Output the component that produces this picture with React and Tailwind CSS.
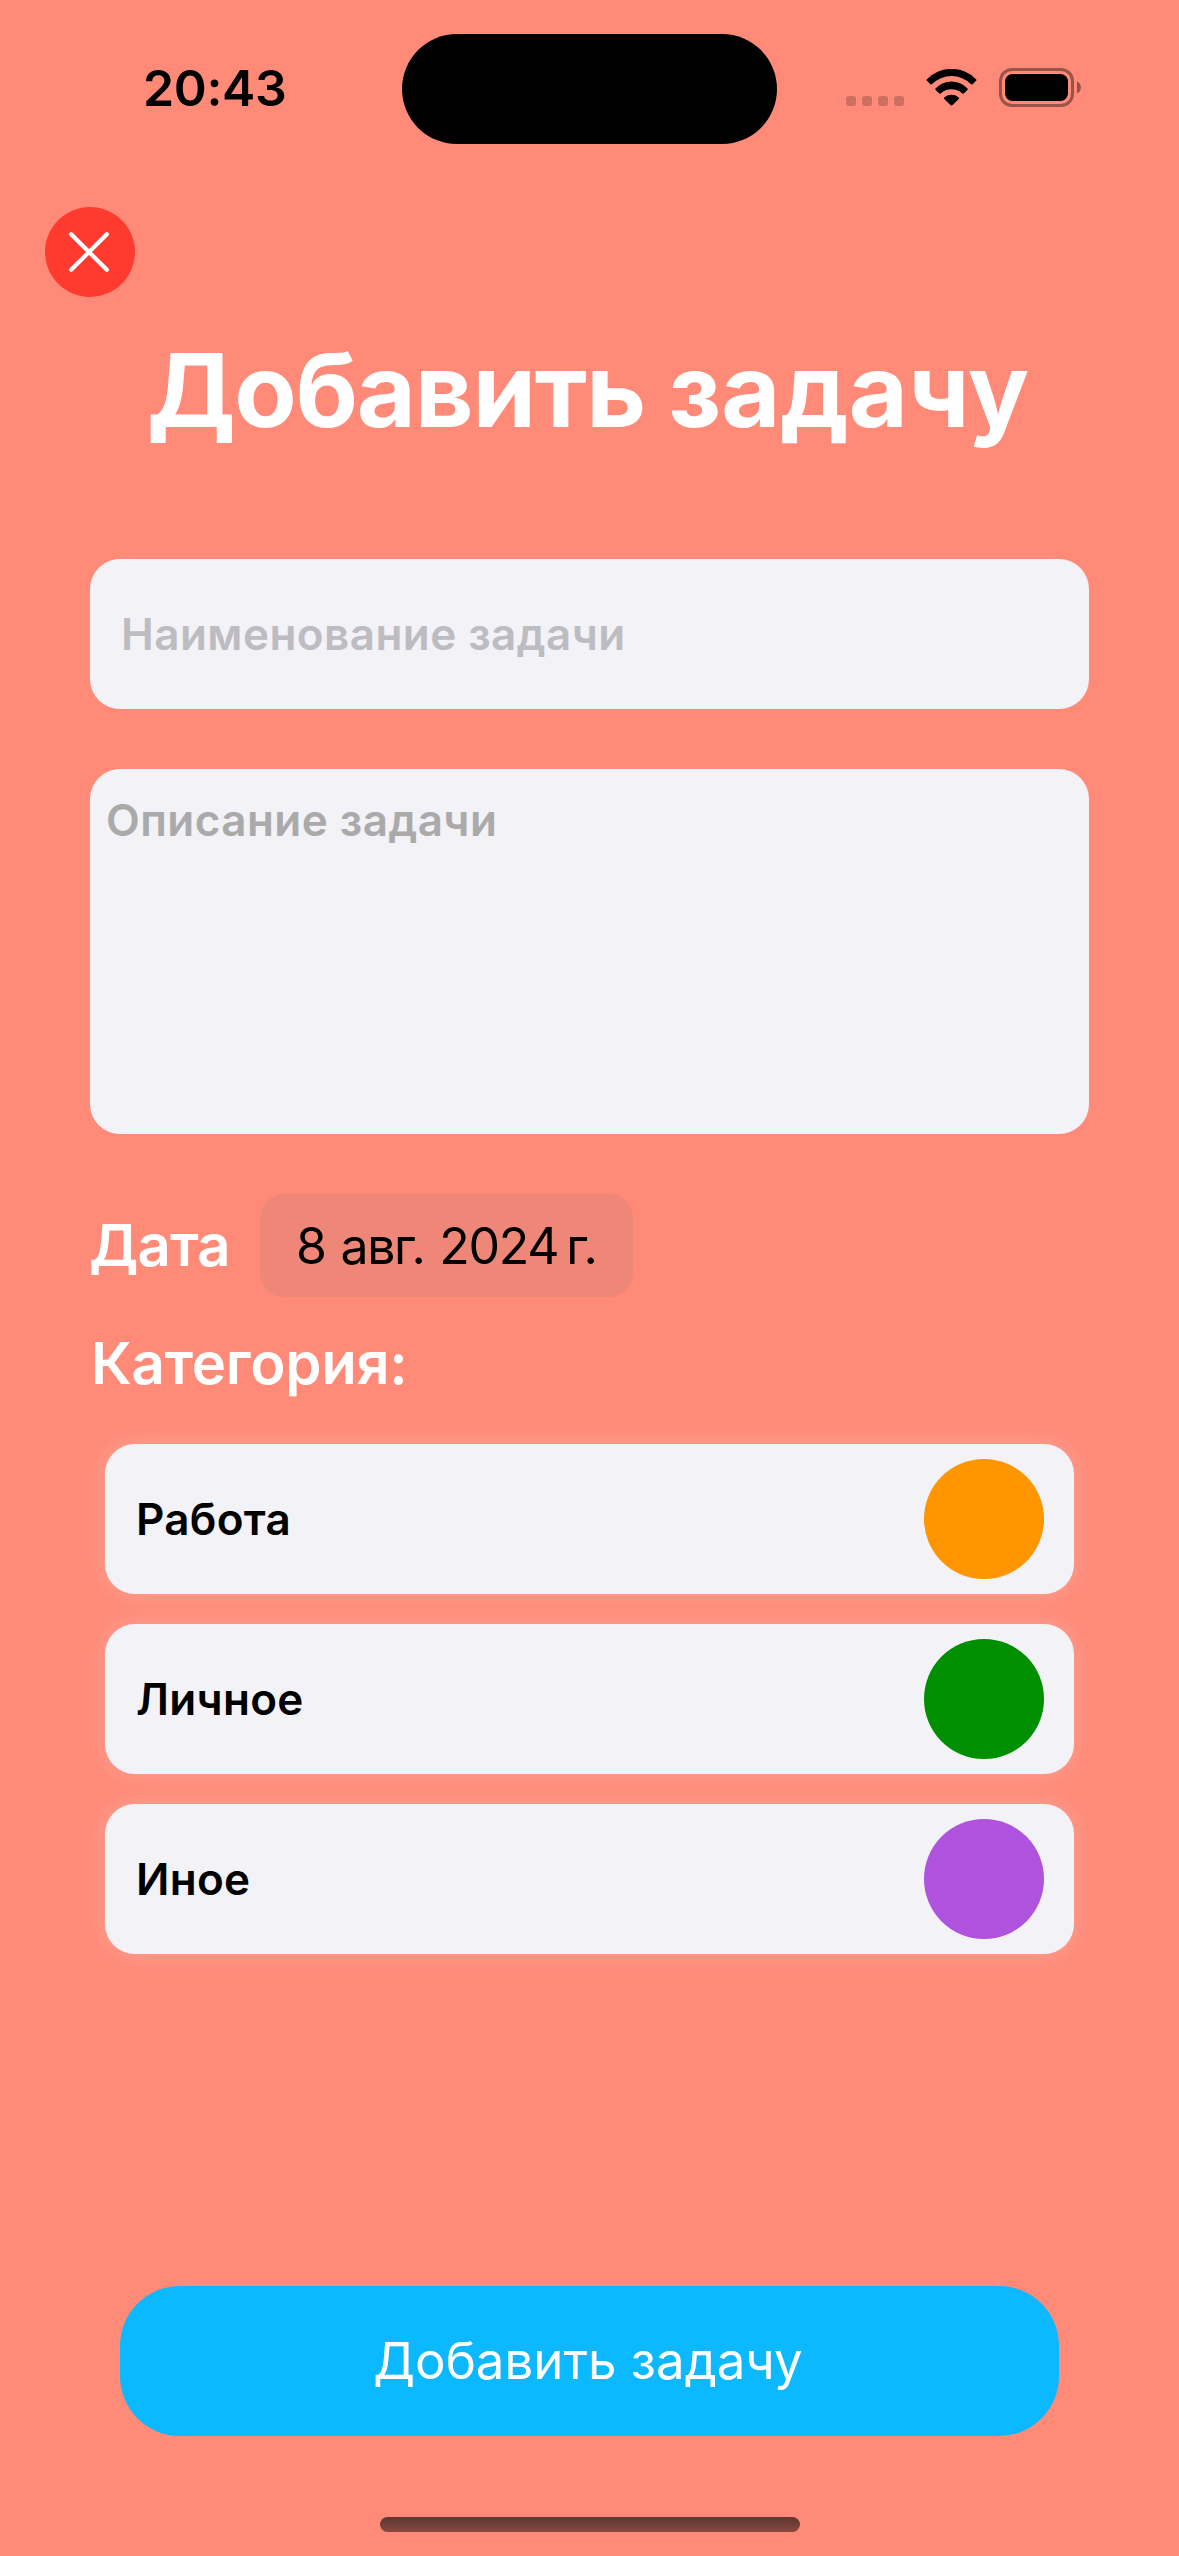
import React from "react";

const categories = [
  { name: "Работа", color: "bg-[#ff9600]" },
  { name: "Личное", color: "bg-[#008f00]" },
  { name: "Иное", color: "bg-[#af52de]" },
];

function WifiIcon() {
  return (
    <svg className="ml-[22px] h-[37px] w-[51px]" viewBox="0 0 51 37" fill="#000">
      <path d="M.9 11.8Q.1 11 1 10.2A34.2 34.2 0 0 1 50 10.2Q50.9 11 50.1 11.8L46.6 15.2Q45.9 15.9 45.1 15.2A27.6 27.6 0 0 0 5.9 15.2Q5.1 15.9 4.4 15.2Z" />
      <path d="M9.6 20.9Q8.8 20.1 9.7 19.3A21.9 21.9 0 0 1 41.3 19.3Q42.2 20.1 41.4 20.9L37.9 24.3Q37.1 25 36.3 24.4A16 16 0 0 0 14.7 24.4Q13.9 25 13.1 24.3Z" />
      <path d="M18.3 29.9Q17.5 29 18.5 28.2A11.4 11.4 0 0 1 32.5 28.2Q33.5 29 32.7 29.9L26.3 36.3Q25.5 37.1 24.7 36.3Z" />
    </svg>
  );
}

function BatteryIcon() {
  return (
    <svg className="ml-[22px] h-[39px] w-[82px]" viewBox="0 0 82 39">
      <rect x="1.5" y="1.5" width="72" height="36" rx="11.5" fill="none" stroke="#000" strokeOpacity=".4" strokeWidth="3" />
      <rect x="6" y="6" width="63" height="27" rx="7.5" fill="#000" />
      <path d="M78 13.5a6.6 6.6 0 0 1 0 12z" fill="#000" fillOpacity=".42" />
    </svg>
  );
}

function StatusBar() {
  return (
    <header className="grid h-[178px] grid-cols-[402px_375px_402px] items-center">
      <div className="pb-[2px] pl-[143px] text-[50px] leading-[60px] font-semibold tracking-[-0.35px] text-black">20:43</div>
      <div className="h-[110px] rounded-full bg-black" />
      <div className="flex items-center pb-[3px] pl-[69px]">
        <div className="mt-[27px] flex gap-[6px]">
          {[0, 1, 2, 3].map((dot) => (
            <span key={dot} className="size-[10px] rounded-[3px] bg-black/20" />
          ))}
        </div>
        <WifiIcon />
        <BatteryIcon />
      </div>
    </header>
  );
}

function CategoryRow({ name, color }) {
  return (
    <li className="flex h-[150px] items-center justify-between rounded-[30px] bg-[#f2f2f7] pr-[30px] pl-[31px] text-[44px] font-semibold tracking-[0.3px] text-black shadow-[0_0_24px_rgba(255,255,255,0.22)]">
      <span>{name}</span>
      <span className={`size-[120px] rounded-full ${color}`} />
    </li>
  );
}

export default function App() {
  return (
    <div className="flex h-[2556px] w-[1179px] flex-col bg-[#ff8a78] font-['Inter',sans-serif]">
      <StatusBar />

      <button className="mt-[29px] ml-[45px] flex size-[90px] items-center justify-center rounded-full bg-[#ff3b30]">
        <svg className="mr-[2px] size-[42px]" viewBox="0 0 42 42" fill="none" stroke="#fff" strokeWidth="4.2" strokeLinecap="round">
          <path d="M3.2 3.2l35.6 35.6M38.8 3.2L3.2 38.8" />
        </svg>
      </button>

      <h1 className="mt-[33px] pl-[147px] text-[102px] leading-[120px] font-bold tracking-[-1.2px] whitespace-nowrap text-white">
        Добавить <span className="tracking-[0.1px]">задачу</span>
      </h1>

      <main className="mt-[109px] flex flex-col px-[90px]">
        <div className="flex h-[150px] items-center rounded-[30px] bg-[#f2f2f7] px-[31px] text-[44px] font-semibold tracking-[0.45px] text-[#bdbcc1]">
          Наименование задачи
        </div>
        <div className="mt-[60px] h-[365px] rounded-[30px] bg-[#f2f2f7] px-[16px] pt-[21px] text-[44px] leading-[60px] font-semibold tracking-[0.45px] text-[#aaaaaa]">
          Описание задачи
        </div>

        <div className="mt-[60px] flex h-[103px] items-center">
          <span className="-ml-px w-[171px] text-[58px] font-semibold tracking-[-0.9px] text-white">Дата</span>
          <div className="flex h-full w-[373px] items-center rounded-[24px] bg-[#ef8779] pt-[2px] pl-[36px] text-[50px] tracking-[-1.3px] whitespace-nowrap text-black [word-spacing:2px]">
            <span>8 авг. 2024</span>
            <span className="ml-[8px]">г.</span>
          </div>
        </div>

        <h2 className="mt-[31px] pl-px text-[58px] leading-[70px] font-semibold tracking-[-0.25px] text-white">Категория:</h2>

        <ul className="mx-[15px] mt-[46px] flex flex-col gap-[30px]">
          {categories.map((category) => (
            <CategoryRow key={category.name} {...category} />
          ))}
        </ul>
      </main>

      <footer className="mt-auto flex flex-col items-center pb-6">
        <button className="h-[150px] w-[939px] rounded-[60px] bg-[#0cb8ff] pr-[3px] text-[51px] text-white">
          Добавить задачу
        </button>
        <div className="mt-[81px] h-[15px] w-[420px] rounded-full bg-linear-to-b from-[#5c3630] to-[#87493f]" />
      </footer>
    </div>
  );
}
